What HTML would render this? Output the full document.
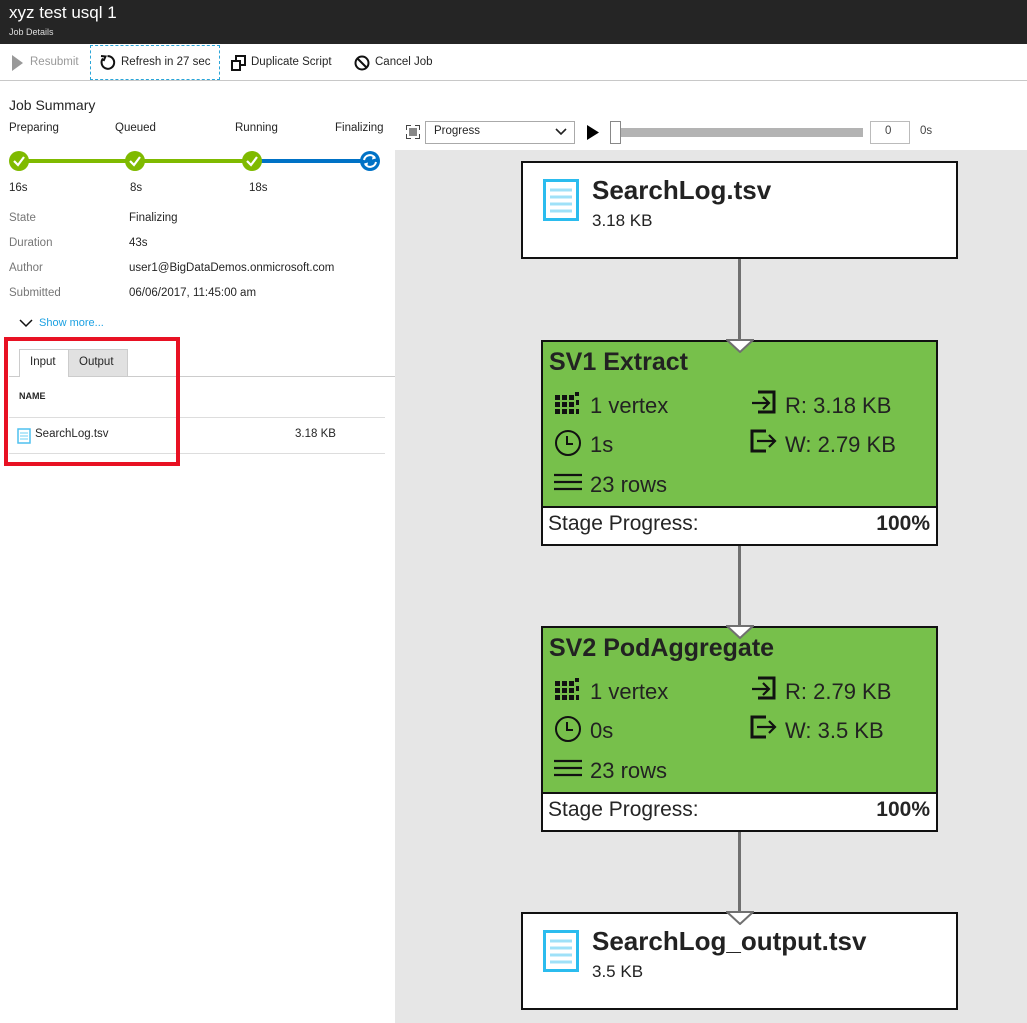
<!DOCTYPE html>
<html><head><meta charset="utf-8">
<style>
*{margin:0;padding:0;box-sizing:border-box}
body{width:1027px;height:1023px;position:relative;overflow:hidden;background:#fff;font-family:"Segoe UI","Liberation Sans",sans-serif;color:#252525}
.a{position:absolute;white-space:nowrap}
.s12{font-size:11.5px}
.g{color:#767676}
.node{position:absolute;border:2px solid #111;background:#fff}
.stage{position:absolute;border:2px solid #111;background:#77c04b}
.stage .t{position:absolute;left:6px;top:6px;font-size:25px;font-weight:bold;color:#222}
.stage .v{position:absolute;font-size:22px;color:#222}
.stage .bot{position:absolute;left:0;right:0;bottom:0;height:38px;background:#fff;border-top:2px solid #111;font-size:21px}
.line{position:absolute;left:738px;width:3px;background:#707070}
</style></head><body>
<div class="a" style="left:0;top:0;width:1027px;height:44px;background:#252525"></div>
<div class="a" style="left:9px;top:3px;font-size:17px;color:#fff">xyz test usql 1</div>
<div class="a" style="left:9px;top:27px;font-size:9px;color:#ddd">Job Details</div>

<svg class="a" style="left:12px;top:55px" width="12" height="16"><path d="M0 0L11 8L0 16Z" fill="#999"/></svg>
<div class="a s12" style="left:30px;top:56px;color:#999">Resubmit</div>
<div class="a" style="left:90px;top:45px;width:130px;height:35px;border:1px dashed #2aa5d8"></div>
<svg class="a" style="left:99px;top:54px" width="17" height="17" viewBox="0 0 17 17"><path d="M4 4.5A6.3 6.3 0 1 0 8.5 2.2" fill="none" stroke="#111" stroke-width="2"/><path d="M2 2L6.5 2.5L4.5 7" fill="none" stroke="#111" stroke-width="2"/></svg>
<div class="a s12" style="left:121px;top:56px">Refresh in 27 sec</div>
<svg class="a" style="left:231px;top:55px" width="15" height="16"><rect x="1" y="6" width="8" height="9" fill="none" stroke="#111" stroke-width="2"/><path d="M5 6V1H14V10H9" fill="none" stroke="#111" stroke-width="2"/></svg>
<div class="a s12" style="left:251px;top:56px">Duplicate Script</div>
<svg class="a" style="left:354px;top:55px" width="16" height="16"><circle cx="8" cy="8" r="6.5" fill="none" stroke="#111" stroke-width="2"/><path d="M3.5 3.5L12.5 12.5" stroke="#111" stroke-width="2"/></svg>
<div class="a s12" style="left:375px;top:56px">Cancel Job</div>
<div class="a" style="left:0;top:80px;width:1027px;height:1px;background:#c8c8c8"></div>

<div class="a" style="left:9px;top:97px;font-size:14px">Job Summary</div>
<div class="a s12" style="left:9px;top:122px">Preparing</div>
<div class="a s12" style="left:115px;top:122px">Queued</div>
<div class="a s12" style="left:235px;top:122px">Running</div>
<div class="a s12" style="left:335px;top:122px">Finalizing</div>
<div class="a" style="left:20px;top:159px;width:232px;height:4px;background:#7fba00"></div>
<div class="a" style="left:252px;top:159px;width:118px;height:4px;background:#0072c6"></div>
<svg class="a" style="left:9px;top:150px" width="372" height="22">
<g fill="#7fba00"><circle cx="10" cy="11" r="10"/><circle cx="126" cy="11" r="10"/><circle cx="243" cy="11" r="10"/></g>
<g fill="none" stroke="#fff" stroke-width="2.2"><path d="M5 11L9 15L15 7"/><path d="M121 11L125 15L131 7"/><path d="M238 11L242 15L248 7"/></g>
<circle cx="361" cy="11" r="10" fill="#0072c6"/>
<path d="M355 10A6 6 0 0 1 366 8M367 12A6 6 0 0 1 356 14" fill="none" stroke="#fff" stroke-width="2"/>
<path d="M364 5L367 8.5L363 9.5Z M358 17L355 13.5L359 12.5Z" fill="#fff"/>
</svg>
<div class="a s12" style="left:9px;top:182px">16s</div>
<div class="a s12" style="left:130px;top:182px">8s</div>
<div class="a s12" style="left:249px;top:182px">18s</div>

<div class="a s12 g" style="left:9px;top:212px">State</div><div class="a s12" style="left:129px;top:212px">Finalizing</div>
<div class="a s12 g" style="left:9px;top:237px">Duration</div><div class="a s12" style="left:129px;top:237px">43s</div>
<div class="a s12 g" style="left:9px;top:262px">Author</div><div class="a s12" style="left:129px;top:262px">user1@BigDataDemos.onmicrosoft.com</div>
<div class="a s12 g" style="left:9px;top:287px">Submitted</div><div class="a s12" style="left:129px;top:287px">06/06/2017, 11:45:00 am</div>
<svg class="a" style="left:19px;top:319px" width="14" height="9"><path d="M1 1L7 7L13 1" fill="none" stroke="#111" stroke-width="1.5"/></svg>
<div class="a" style="left:39px;top:317px;font-size:11px;color:#1ba1e2">Show more...</div>

<div class="a" style="left:9px;top:376px;width:386px;height:1px;background:#ccc"></div>
<div class="a" style="left:19px;top:349px;width:50px;height:28px;border:1px solid #ccc;border-bottom:none;background:#fff"></div>
<div class="a s12" style="left:30px;top:356px">Input</div>
<div class="a" style="left:68px;top:349px;width:60px;height:27px;border:1px solid #ccc;border-bottom:none;background:#e1e1e1"></div>
<div class="a s12" style="left:79px;top:356px">Output</div>
<div class="a" style="left:19px;top:391px;font-size:9px;font-weight:bold">NAME</div>
<div class="a" style="left:9px;top:417px;width:376px;height:1px;background:#ddd"></div>
<svg class="a" style="left:17px;top:428px" width="14" height="16"><rect x="1" y="1" width="12" height="14" fill="#fff" stroke="#4fc1ef" stroke-width="1.5"/><path d="M3 5H11M3 8H11M3 11H11" stroke="#9ee0f8" stroke-width="1.4"/></svg>
<div class="a s12" style="left:35px;top:428px">SearchLog.tsv</div>
<div class="a s12" style="left:295px;top:428px">3.18 KB</div>
<div class="a" style="left:9px;top:453px;width:376px;height:1px;background:#ddd"></div>
<div class="a" style="left:4px;top:337px;width:176px;height:129px;border:4px solid #e81123"></div>

<svg class="a" style="left:406px;top:125px" width="14" height="14"><rect x="3" y="3" width="8" height="8" fill="#888"/><path d="M0 0H5M0 0V5M14 0H9M14 0V5M0 14H5M0 14V9M14 14H9M14 14V9" stroke="#444" stroke-width="2"/></svg>
<div class="a" style="left:425px;top:121px;width:150px;height:23px;border:1px solid #aaa"></div>
<div class="a s12" style="left:434px;top:125px">Progress</div>
<svg class="a" style="left:555px;top:128px" width="12" height="8"><path d="M1 1L6 6L11 1" fill="none" stroke="#222" stroke-width="1.6"/></svg>
<svg class="a" style="left:587px;top:125px" width="12" height="15"><path d="M0 0L12 7.5L0 15Z" fill="#000"/></svg>
<div class="a" style="left:615px;top:128px;width:248px;height:9px;background:#b3b3b3"></div>
<div class="a" style="left:610px;top:121px;width:11px;height:23px;border:1px solid #888;background:#fff"></div>
<div class="a" style="left:870px;top:121px;width:40px;height:23px;border:1px solid #bbb"></div>
<div class="a s12" style="left:885px;top:125px;color:#444">0</div>
<div class="a s12" style="left:920px;top:125px;color:#444">0s</div>

<div class="a" style="left:395px;top:150px;width:632px;height:873px;background:#e6e6e6"></div>
<div class="line" style="top:258px;height:84px"></div>
<div class="line" style="top:545px;height:83px"></div>
<div class="line" style="top:831px;height:83px"></div>

<div class="node" style="left:521px;top:161px;width:437px;height:98px"></div>
<svg class="a" style="left:543px;top:179px" width="36" height="42"><rect x="1.5" y="1.5" width="33" height="39" fill="#fff" stroke="#2bbcee" stroke-width="3"/><path d="M7 11H29M7 18H29M7 25H29M7 32H29" stroke="#9fe1f8" stroke-width="3"/></svg>
<div class="a" style="left:592px;top:175px;font-size:26px;font-weight:bold;color:#222">SearchLog.tsv</div>
<div class="a" style="left:592px;top:211px;font-size:17px;color:#222">3.18 KB</div>

<div class="stage" style="left:541px;top:340px;width:397px;height:206px">
<div class="t" style="top:6px">SV1 Extract</div>
<div class="v" style="left:47px;top:51px">1 vertex</div>
<div class="v" style="left:47px;top:90px">1s</div>
<div class="v" style="left:47px;top:130px">23 rows</div>
<div class="v" style="left:242px;top:51px">R: 3.18 KB</div>
<div class="v" style="left:242px;top:90px">W: 2.79 KB</div>
<div class="bot"><span class="a" style="left:5px;top:4px">Stage Progress:</span><span class="a" style="right:6px;top:4px;font-weight:bold">100%</span></div>
</div>
<div class="stage" style="left:541px;top:626px;width:397px;height:206px">
<div class="t" style="top:6px">SV2 PodAggregate</div>
<div class="v" style="left:47px;top:51px">1 vertex</div>
<div class="v" style="left:47px;top:90px">0s</div>
<div class="v" style="left:47px;top:130px">23 rows</div>
<div class="v" style="left:242px;top:51px">R: 2.79 KB</div>
<div class="v" style="left:242px;top:90px">W: 3.5 KB</div>
<div class="bot"><span class="a" style="left:5px;top:4px">Stage Progress:</span><span class="a" style="right:6px;top:4px;font-weight:bold">100%</span></div>
</div>

<svg class="a" style="left:540px;top:330px" width="260" height="480">
<defs>
<g id="ic">
<g fill="#111"><rect x="15" y="65" width="5" height="5"/><rect x="22" y="65" width="5" height="5"/><rect x="29" y="65" width="5" height="5"/><rect x="35" y="62" width="4" height="4"/>
<rect x="15" y="72" width="5" height="5"/><rect x="22" y="72" width="5" height="5"/><rect x="29" y="72" width="5" height="5"/><rect x="36" y="70" width="3" height="5"/>
<rect x="15" y="79" width="5" height="5"/><rect x="22" y="79" width="5" height="5"/><rect x="29" y="79" width="5" height="5"/><rect x="36" y="79" width="3" height="5"/></g>
<circle cx="28" cy="113" r="12" fill="none" stroke="#111" stroke-width="2"/><path d="M27 106V114H33" fill="none" stroke="#111" stroke-width="2"/>
<path d="M14 145H42M14 152H42M14 159H42" stroke="#111" stroke-width="2.2"/>
<path d="M218 62H234V82H218" fill="none" stroke="#111" stroke-width="3"/><path d="M212 73H229M223 67L229 73L223 79" fill="none" stroke="#111" stroke-width="2.2"/>
<path d="M226 101H212V121H226" fill="none" stroke="#111" stroke-width="3"/><path d="M217 111H235M229 105L235 111L229 117" fill="none" stroke="#111" stroke-width="2.2"/>
</g></defs>
<use href="#ic"/>
<use href="#ic" y="286"/>
</svg>

<div class="node" style="left:521px;top:912px;width:437px;height:98px"></div>
<svg class="a" style="left:543px;top:930px" width="36" height="42"><rect x="1.5" y="1.5" width="33" height="39" fill="#fff" stroke="#2bbcee" stroke-width="3"/><path d="M7 11H29M7 18H29M7 25H29M7 32H29" stroke="#9fe1f8" stroke-width="3"/></svg>
<div class="a" style="left:592px;top:926px;font-size:26px;font-weight:bold;color:#222">SearchLog_output.tsv</div>
<div class="a" style="left:592px;top:962px;font-size:17px;color:#222">3.5 KB</div>

<svg class="a" style="left:726px;top:339px" width="28" height="14"><path d="M1 1L14 13L27 1Z" fill="#fff" stroke="#707070" stroke-width="2"/></svg>
<svg class="a" style="left:726px;top:625px" width="28" height="14"><path d="M1 1L14 13L27 1Z" fill="#fff" stroke="#707070" stroke-width="2"/></svg>
<svg class="a" style="left:726px;top:911px" width="28" height="14"><path d="M1 1L14 13L27 1Z" fill="#fff" stroke="#707070" stroke-width="2"/></svg>
</body></html>
